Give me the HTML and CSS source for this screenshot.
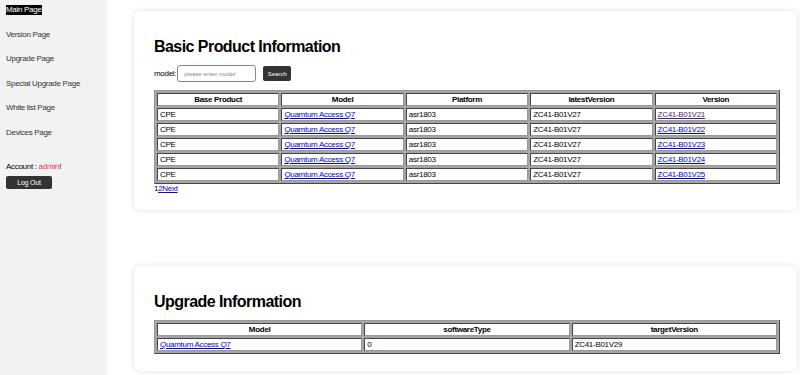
FILE: index.html
```html
<!DOCTYPE html>
<html lang="en">
<head>
    <meta charset="UTF-8">
    <meta name="viewport" content="width=device-width, initial-scale=1.0">
    <title>Main Page</title>
    <link rel="stylesheet" href="styles.css">
</head>
<body>
    <div class="layout">
        <aside class="sidebar">
            <nav class="menu">
                <a class="menu-item active" href="#">Main Page</a>
                <a class="menu-item" href="#">Version Page</a>
                <a class="menu-item" href="#">Upgrade Page</a>
                <a class="menu-item" href="#">Special Upgrade Page</a>
                <a class="menu-item" href="#">White list Page</a>
                <a class="menu-item" href="#">Devices Page</a>
            </nav>
            <div class="account">Account : <span class="user">admin</span>!</div>
            <button class="logout">Log Out</button>
        </aside>

        <main class="content">
            <section class="card">
                <h2>Basic Product Information</h2>
                <div class="search">
                    <label for="model">model:</label>
                    <input type="text" id="model" placeholder="please enter model">
                    <button class="search-btn">Search</button>
                </div>
                <table class="grid">
                    <tr>
                        <th>Base Product</th>
                        <th>Model</th>
                        <th>Platform</th>
                        <th>latestVersion</th>
                        <th>Version</th>
                    </tr>
                    <tr>
                        <td>CPE</td>
                        <td><a href="#">Quamtum Access Q7</a></td>
                        <td>asr1803</td>
                        <td>ZC41-B01V27</td>
                        <td><a class="visited" href="#">ZC41-B01V21</a></td>
                    </tr>
                    <tr>
                        <td>CPE</td>
                        <td><a href="#">Quamtum Access Q7</a></td>
                        <td>asr1803</td>
                        <td>ZC41-B01V27</td>
                        <td><a href="#">ZC41-B01V22</a></td>
                    </tr>
                    <tr>
                        <td>CPE</td>
                        <td><a href="#">Quamtum Access Q7</a></td>
                        <td>asr1803</td>
                        <td>ZC41-B01V27</td>
                        <td><a href="#">ZC41-B01V23</a></td>
                    </tr>
                    <tr>
                        <td>CPE</td>
                        <td><a href="#">Quamtum Access Q7</a></td>
                        <td>asr1803</td>
                        <td>ZC41-B01V27</td>
                        <td><a href="#">ZC41-B01V24</a></td>
                    </tr>
                    <tr>
                        <td>CPE</td>
                        <td><a href="#">Quamtum Access Q7</a></td>
                        <td>asr1803</td>
                        <td>ZC41-B01V27</td>
                        <td><a href="#">ZC41-B01V25</a></td>
                    </tr>
                </table>
                <div class="pager">1<a href="#">2</a><a href="#">Next</a></div>
            </section>

            <section class="card">
                <h2>Upgrade Information</h2>
                <table class="grid">
                    <tr>
                        <th>Model</th>
                        <th>softwareType</th>
                        <th>targetVersion</th>
                    </tr>
                    <tr>
                        <td><a href="#">Quamtum Access Q7</a></td>
                        <td>0</td>
                        <td>ZC41-B01V29</td>
                    </tr>
                </table>
            </section>
        </main>
    </div>
</body>
</html>
```

FILE: styles.css
```css
/* General */
* {
    margin: 0;
    padding: 0;
    box-sizing: border-box;
    font-family: "Liberation Sans", Arial, sans-serif;
}

body {
    background-color: #fff;
    color: #000;
    font-size: 8px;
    letter-spacing: -0.3px;
    height: 375px;
    overflow: hidden;
}

.layout {
    display: flex;
    height: 375px;
}

/* Sidebar */
.sidebar {
    width: 107px;
    flex-shrink: 0;
    background-color: #f2f2f2;
    padding: 5px 6px;
}

.menu {
    display: flex;
    flex-direction: column;
    align-items: flex-start;
    gap: 14.5px;
}

.menu-item {
    color: #333;
    text-decoration: none;
    font-size: 8px;
    line-height: 10px;
}

.menu-item.active {
    background-color: #000;
    color: #fff;
}

.account {
    margin-top: 24px;
    line-height: 10px;
}

.user {
    color: #ff2a55;
}

.logout {
    margin-top: 4px;
    width: 46px;
    height: 13px;
    background-color: #333;
    color: #fff;
    border: none;
    border-radius: 2px;
    font-size: 7px;
    letter-spacing: -0.2px;
}

/* Cards */
.content {
    flex: 1;
    padding: 11px 3px 0 27px;
    display: flex;
    flex-direction: column;
    gap: 56px;
}

.card {
    background-color: #fff;
    border-radius: 6px;
    box-shadow: 0 0 6px rgba(0, 0, 0, 0.12);
    padding: 26px 17px 17px 20px;
}

.card h2 {
    font-size: 16px;
    letter-spacing: -0.55px;
    line-height: 20px;
    font-weight: bold;
    margin-bottom: 8px;
}

.search {
    display: flex;
    align-items: center;
    margin-bottom: 8px;
}

.search label {
    font-size: 8px;
    margin-right: 1px;
}

.search input {
    width: 79px;
    height: 17px;
    border: 1px solid #888;
    border-radius: 3px;
    padding: 0 6px;
    font-size: 6px;
    letter-spacing: 0;
}

.search input::placeholder {
    color: #888;
}

.search-btn {
    margin-left: 7px;
    width: 28px;
    height: 15px;
    background-color: #333;
    color: #fff;
    border: none;
    border-radius: 2px;
    font-size: 6px;
    letter-spacing: 0;
}

/* Tables */
.grid {
    width: 100%;
    table-layout: fixed;
    border: 1px outset #999;
    border-spacing: 2px;
    background-color: #a5a5a5;
}

.grid th,
.grid td {
    background-color: #fff;
    border: 1px inset #999;
    height: 13px;
    padding: 0 2px;
    font-size: 8px;
    line-height: 11px;
    white-space: nowrap;
    overflow: hidden;
}

.grid th {
    text-align: center;
    font-weight: bold;
}

.grid td {
    text-align: left;
}

.grid a,
.pager a {
    color: #00e;
}

.grid a.visited {
    color: #551a8b;
}

.pager {
    font-size: 8px;
    line-height: 9px;
}
```
